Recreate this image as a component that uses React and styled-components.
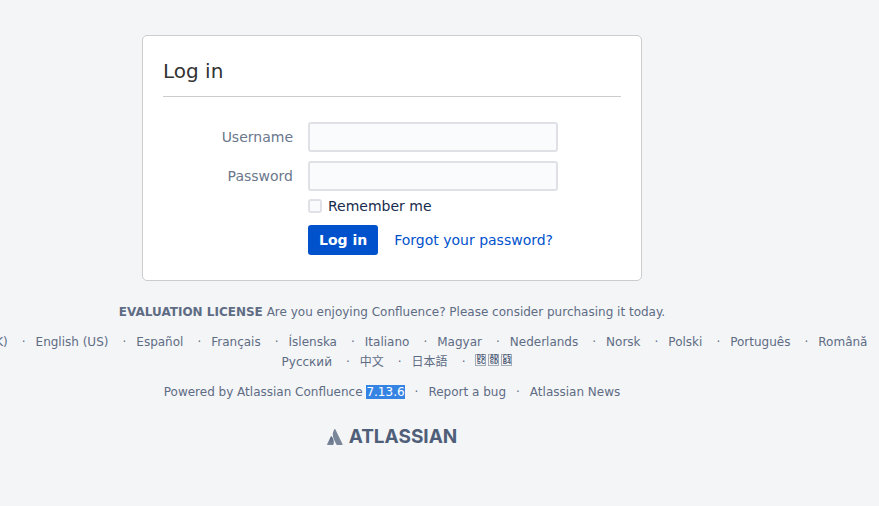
import React from 'react';
import styled, { createGlobalStyle, css } from 'styled-components';

const Global = createGlobalStyle`
  *, *::before, *::after { box-sizing: border-box; }
  body {
    margin: 0;
    background: #f4f5f7;
    color: #172b4d;
    font: 14px/20px "DejaVu Sans", "Noto Sans CJK SC", sans-serif;
    overflow-x: hidden;
  }
`;

const Page = styled.div`
  display: flex;
  flex-direction: column;
  align-items: center;
  padding: 35px 95px 35px 0;
`;

const Card = styled.main`
  width: 100%;
  max-width: 500px;
  padding: 20px 20px 25px;
  background: #fff;
  border: 1px solid #ccc;
  border-radius: 5px;
`;

const Title = styled.h1`
  margin: 0 0 25px;
  padding: 3px 0 12px;
  border-bottom: 1px solid #ccc;
  color: #333;
  font-size: 20px;
  font-weight: 400;
  line-height: 25px;
`;

const Form = styled.form`
  display: flex;
  flex-direction: column;
`;

const Field = styled.div`
  display: grid;
  grid-template-columns: 130px minmax(0, 250px);
  column-gap: 15px;
  align-items: center;
  margin-bottom: 9px;
`;

const FieldLabel = styled.label`
  color: #6b778c;
  text-align: right;
`;

const boxed = css`
  margin: 0;
  background: #fafbfc;
  border: 2px solid #dfe1e6;
  border-radius: 3px;
`;

const TextInput = styled.input`
  ${boxed}
  width: 100%;
  height: 30px;
  padding: 3px 4px;
  color: inherit;
  font: inherit;
`;

const Remember = styled.div`
  display: flex;
  align-items: center;
  gap: 6px;
  margin: -4px 0 9px 145px;
`;

const Checkbox = styled.input`
  ${boxed}
  appearance: none;
  width: 14px;
  height: 14px;
  &:checked { background: #0052cc; border-color: #0052cc; }
`;

const Actions = styled.div`
  display: flex;
  align-items: center;
  gap: 16px;
  margin-left: 145px;
`;

const Submit = styled.button`
  height: 30px;
  padding: 0 11px;
  border: 0;
  border-radius: 3px;
  background: #0052cc;
  color: #fff;
  font: inherit;
  font-weight: 700;
`;

const TextLink = styled.a`
  color: #0052cc;
  text-decoration: none;
`;

const Footer = styled.footer`
  display: flex;
  flex-direction: column;
  align-items: center;
  gap: 10px;
  width: 100%;
  margin-top: 21px;
  color: #5e6c84;
  font-size: 12px;
  text-align: center;
  a { color: inherit; text-decoration: none; }
`;

const Notice = styled.p`
  margin: 0;
`;

const Languages = styled.nav`
  display: flex;
  flex-direction: column;
  align-items: center;
  padding-left: 18px;
`;

const LinkRow = styled.ul`
  display: flex;
  justify-content: center;
  width: 0;
  height: 20px;
  margin: 0;
  padding: 0;
  list-style: none;
  white-space: nowrap;
  li { flex: none; }
  li + li::before {
    content: "·";
    margin: 0 10px 0 ${(p) => (p.$compact ? '10px' : '14px')};
  }
`;

const Version = styled.span`
  background: #3584e4;
  color: #fff;
`;

const CodeLink = styled.a`
  display: inline-flex;
  gap: 2px;
  padding-right: 8px;
  vertical-align: 7px;
`;

const CodeBox = styled.span`
  width: 11px;
  height: 12px;
  border: 1px solid #a5adba;
  color: #505f79;
  font: 700 7px/5px "Liberation Mono", monospace;
  white-space: normal;
  word-break: break-all;
`;

const Brand = styled.a`
  display: flex;
  align-items: center;
  gap: 6px;
  margin-top: 15px;
  && { color: #505f79; }
  font: 700 19px/20px Inter, sans-serif;
`;

const languages = ['English (UK)', 'English (US)', 'Español', 'Français', 'Íslenska', 'Italiano', 'Magyar', 'Nederlands', 'Norsk', 'Polski', 'Português', 'Română'];
const moreLanguages = ['Русский', '中文', '日本語'];
const koreanCodes = ['D55C', 'AD6D', 'C5B4'];

function AtlassianMark() {
  return (
    <svg width="16" height="16" viewBox="0 0 16 16" aria-hidden="true">
      <defs>
        <linearGradient id="mark" x1="7" y1="6" x2="2" y2="15" gradientUnits="userSpaceOnUse">
          <stop offset="0" stopColor="#505f79" />
          <stop offset="1" stopColor="#7a869a" />
        </linearGradient>
      </defs>
      <path d="M4.7 7.4c-.3-.3-.7-.3-.9.1L.1 15.2c-.2.4 0 .8.5.8h5.2c.2 0 .4-.1.5-.3 1.1-2.3.4-5.9-1.6-8.3z" fill="url(#mark)" />
      <path d="M7.4.3C5.3 3.7 5.4 7.4 6.8 10.2l2.6 5.4c.1.2.3.4.5.4h5.2c.5 0 .7-.4.5-.8L8.3.3c-.2-.4-.7-.4-.9 0z" fill="#7a869a" />
    </svg>
  );
}

export default function App() {
  return (
    <>
      <Global />
      <Page>
        <Card>
          <Title>Log in</Title>
          <Form onSubmit={(e) => e.preventDefault()}>
            <Field>
              <FieldLabel htmlFor="username">Username</FieldLabel>
              <TextInput id="username" type="text" />
            </Field>
            <Field>
              <FieldLabel htmlFor="password">Password</FieldLabel>
              <TextInput id="password" type="password" />
            </Field>
            <Remember>
              <Checkbox id="remember" type="checkbox" />
              <label htmlFor="remember">Remember me</label>
            </Remember>
            <Actions>
              <Submit type="submit">Log in</Submit>
              <TextLink href="#forgot">Forgot your password?</TextLink>
            </Actions>
          </Form>
        </Card>
        <Footer>
          <Notice>
            <strong>EVALUATION LICENSE</strong> Are you enjoying Confluence? Please consider purchasing it today.
          </Notice>
          <Languages aria-label="Languages">
            <LinkRow>
              {languages.map((name) => (
                <li key={name}><a href="#language">{name}</a></li>
              ))}
            </LinkRow>
            <LinkRow>
              {moreLanguages.map((name) => (
                <li key={name}><a href="#language">{name}</a></li>
              ))}
              <li>
                <CodeLink href="#language" lang="ko">
                  {koreanCodes.map((code) => <CodeBox key={code}>{code}</CodeBox>)}
                </CodeLink>
              </li>
            </LinkRow>
          </Languages>
          <LinkRow $compact>
            <li>Powered by <a href="#confluence">Atlassian Confluence</a> <Version>7.13.6</Version></li>
            <li><a href="#bug">Report a bug</a></li>
            <li><a href="#news">Atlassian News</a></li>
          </LinkRow>
          <Brand href="#atlassian"><AtlassianMark />ATLASSIAN</Brand>
        </Footer>
      </Page>
    </>
  );
}
